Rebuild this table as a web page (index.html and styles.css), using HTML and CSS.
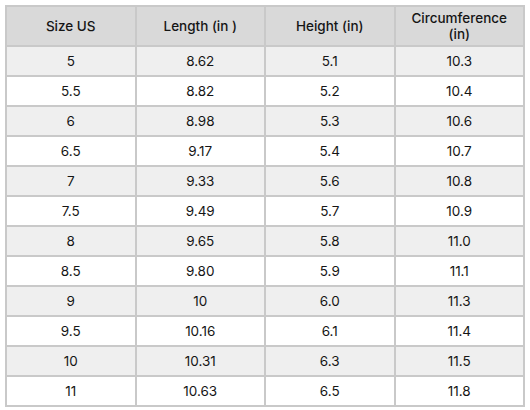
FILE: index.html
```html
<!DOCTYPE html>
<html>
<head>
<meta charset="utf-8">
<link rel="stylesheet" href="styles.css">
</head>
<body>
<table class="sizes">
  <thead>
    <tr><th>Size US</th><th>Length (in )</th><th>Height (in)</th><th>Circumference<br>(in)</th></tr>
  </thead>
  <tbody>
    <tr><td>5</td><td>8.62</td><td>5.1</td><td>10.3</td></tr>
    <tr><td>5.5</td><td>8.82</td><td>5.2</td><td>10.4</td></tr>
    <tr><td>6</td><td>8.98</td><td>5.3</td><td>10.6</td></tr>
    <tr><td>6.5</td><td>9.17</td><td>5.4</td><td>10.7</td></tr>
    <tr><td>7</td><td>9.33</td><td>5.6</td><td>10.8</td></tr>
    <tr><td>7.5</td><td>9.49</td><td>5.7</td><td>10.9</td></tr>
    <tr><td>8</td><td>9.65</td><td>5.8</td><td>11.0</td></tr>
    <tr><td>8.5</td><td>9.80</td><td>5.9</td><td>11.1</td></tr>
    <tr><td>9</td><td>10</td><td>6.0</td><td>11.3</td></tr>
    <tr><td>9.5</td><td>10.16</td><td>6.1</td><td>11.4</td></tr>
    <tr><td>10</td><td>10.31</td><td>6.3</td><td>11.5</td></tr>
    <tr><td>11</td><td>10.63</td><td>6.5</td><td>11.8</td></tr>
  </tbody>
</table>
</body>
</html>
```
FILE: styles.css
```css
html, body {
  margin: 0;
  padding: 0;
  background: #ffffff;
}
body {
  padding: 5px;
  font-family: Inter, "Liberation Sans", sans-serif;
  color: #151515;
}
.sizes {
  border-collapse: collapse;
  width: 520px;
  table-layout: fixed;
  border: 2px solid #c9c9c9;
}
.sizes th, .sizes td {
  border: 2px solid #c9c9c9;
  text-align: center;
  padding: 0;
  font-size: 13.5px;
}
.sizes th {
  background: #d9d9d9;
  font-weight: 500;
  height: 38px;
  line-height: 16px;
}
.sizes td {
  height: 28px;
  font-weight: 400;
}
.sizes tbody tr:nth-child(odd) td {
  background: #efefef;
}
```
